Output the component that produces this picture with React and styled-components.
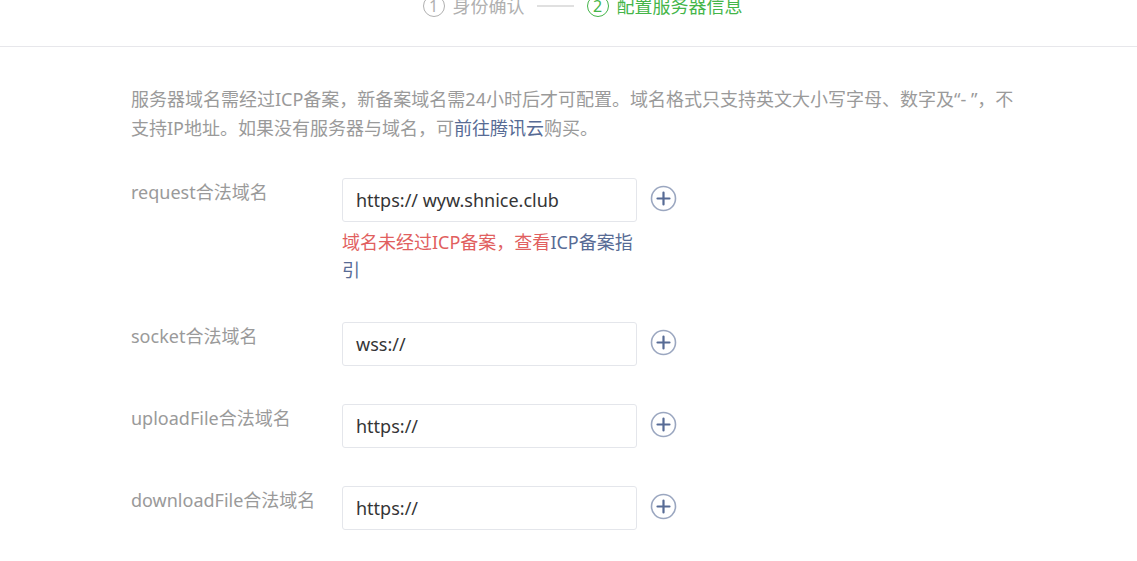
import React from "react";
import styled, { createGlobalStyle } from "styled-components";

const Global = createGlobalStyle`
  html, body { margin: 0; padding: 0; background: #fff; }
  body {
    font-family: "Noto Sans", "Noto Sans CJK SC", sans-serif;
    overflow: hidden;
  }
  * { box-sizing: border-box; }
`;

const Page = styled.div`
  width: 1137px;
  height: 561px;
  overflow: hidden;
  background: #fff;
`;

const Header = styled.div`
  height: 47px;
  border-bottom: 1px solid #e7e7eb;
  display: flex;
  justify-content: center;
  align-items: flex-start;
  padding-left: 28px;
  overflow: hidden;
`;

const Steps = styled.div`
  display: flex;
  align-items: center;
  margin-top: -6px;
  height: 24px;
  font-size: 18px;
  line-height: 24px;
`;

const Step = styled.div`
  display: flex;
  align-items: center;
  gap: 8px;
  color: ${(p) => (p.$active ? "#44b549" : "#b0b0b0")};
`;

const StepNum = styled.span`
  width: 22px;
  height: 22px;
  border-radius: 50%;
  border: 1px solid currentColor;
  display: inline-flex;
  align-items: center;
  justify-content: center;
  font-size: 16px;
  line-height: 1;
`;

const StepLine = styled.span`
  display: block;
  width: 37px;
  height: 2px;
  background: #e0e0e0;
  margin: 0 13px 0 12px;
`;

const Body = styled.div`
  padding: 38px 0 0 131px;
`;

const Desc = styled.p`
  margin: 0;
  width: 890px;
  font-size: 18px;
  line-height: 29px;
  color: #9a9a9a;
`;

const Link = styled.a`
  color: #576b95;
  text-decoration: none;
`;

const Form = styled.div`
  margin-top: 35px;
  display: flex;
  flex-direction: column;
  gap: 38px;
`;

const Row = styled.div`
  display: flex;
  align-items: flex-start;
`;

const Label = styled.div`
  width: 211px;
  flex-shrink: 0;
  font-size: 18px;
  line-height: 29px;
  color: #9a9a9a;
`;

const Field = styled.div`
  width: 295px;
  display: flex;
  flex-direction: column;
`;

const Input = styled.div`
  height: 44px;
  border: 1px solid #e4e6eb;
  border-radius: 3px;
  padding: 0 13px;
  display: flex;
  align-items: center;
  font-size: 18px;
  color: #353535;
  background: #fff;
`;

const Error = styled.div`
  margin-top: 6px;
  font-size: 18px;
  line-height: 28px;
  color: #e15f5f;
`;

const AddBtn = styled.button`
  margin: 7px 0 0 13px;
  width: 27px;
  height: 27px;
  padding: 0;
  border: none;
  background: none;
  display: flex;
  align-items: center;
  justify-content: center;
  cursor: pointer;
`;

const PlusIcon = () => (
  <svg width="27" height="27" viewBox="0 0 27 27">
    <circle cx="13.5" cy="13.5" r="12" fill="none" stroke="#9ba7c0" strokeWidth="1.6" />
    <path d="M13.5 7.5v12M7.5 13.5h12" stroke="#576b95" strokeWidth="2.2" strokeLinecap="round" />
  </svg>
);

const rows = [
  { label: "request合法域名", value: "https:// wyw.shnice.club", error: true },
  { label: "socket合法域名", value: "wss://" },
  { label: "uploadFile合法域名", value: "https://" },
  { label: "downloadFile合法域名", value: "https://" },
];

export default function App() {
  return (
    <Page>
      <Global />
      <Header>
        <Steps>
          <Step>
            <StepNum>1</StepNum>
            身份确认
          </Step>
          <StepLine />
          <Step $active>
            <StepNum>2</StepNum>
            配置服务器信息
          </Step>
        </Steps>
      </Header>
      <Body>
        <Desc>
          服务器域名需经过ICP备案，新备案域名需24小时后才可配置。域名格式只支持英文大小写字母、数字及“- ”，不支持IP地址。如果没有服务器与域名，可
          <Link href="#">前往腾讯云</Link>购买。
        </Desc>
        <Form>
          {rows.map((r) => (
            <Row key={r.label}>
              <Label>{r.label}</Label>
              <Field>
                <Input>{r.value}</Input>
                {r.error && (
                  <Error>
                    域名未经过ICP备案，查看<Link href="#">ICP备案指引</Link>
                  </Error>
                )}
              </Field>
              <AddBtn aria-label="添加">
                <PlusIcon />
              </AddBtn>
            </Row>
          ))}
        </Form>
      </Body>
    </Page>
  );
}
